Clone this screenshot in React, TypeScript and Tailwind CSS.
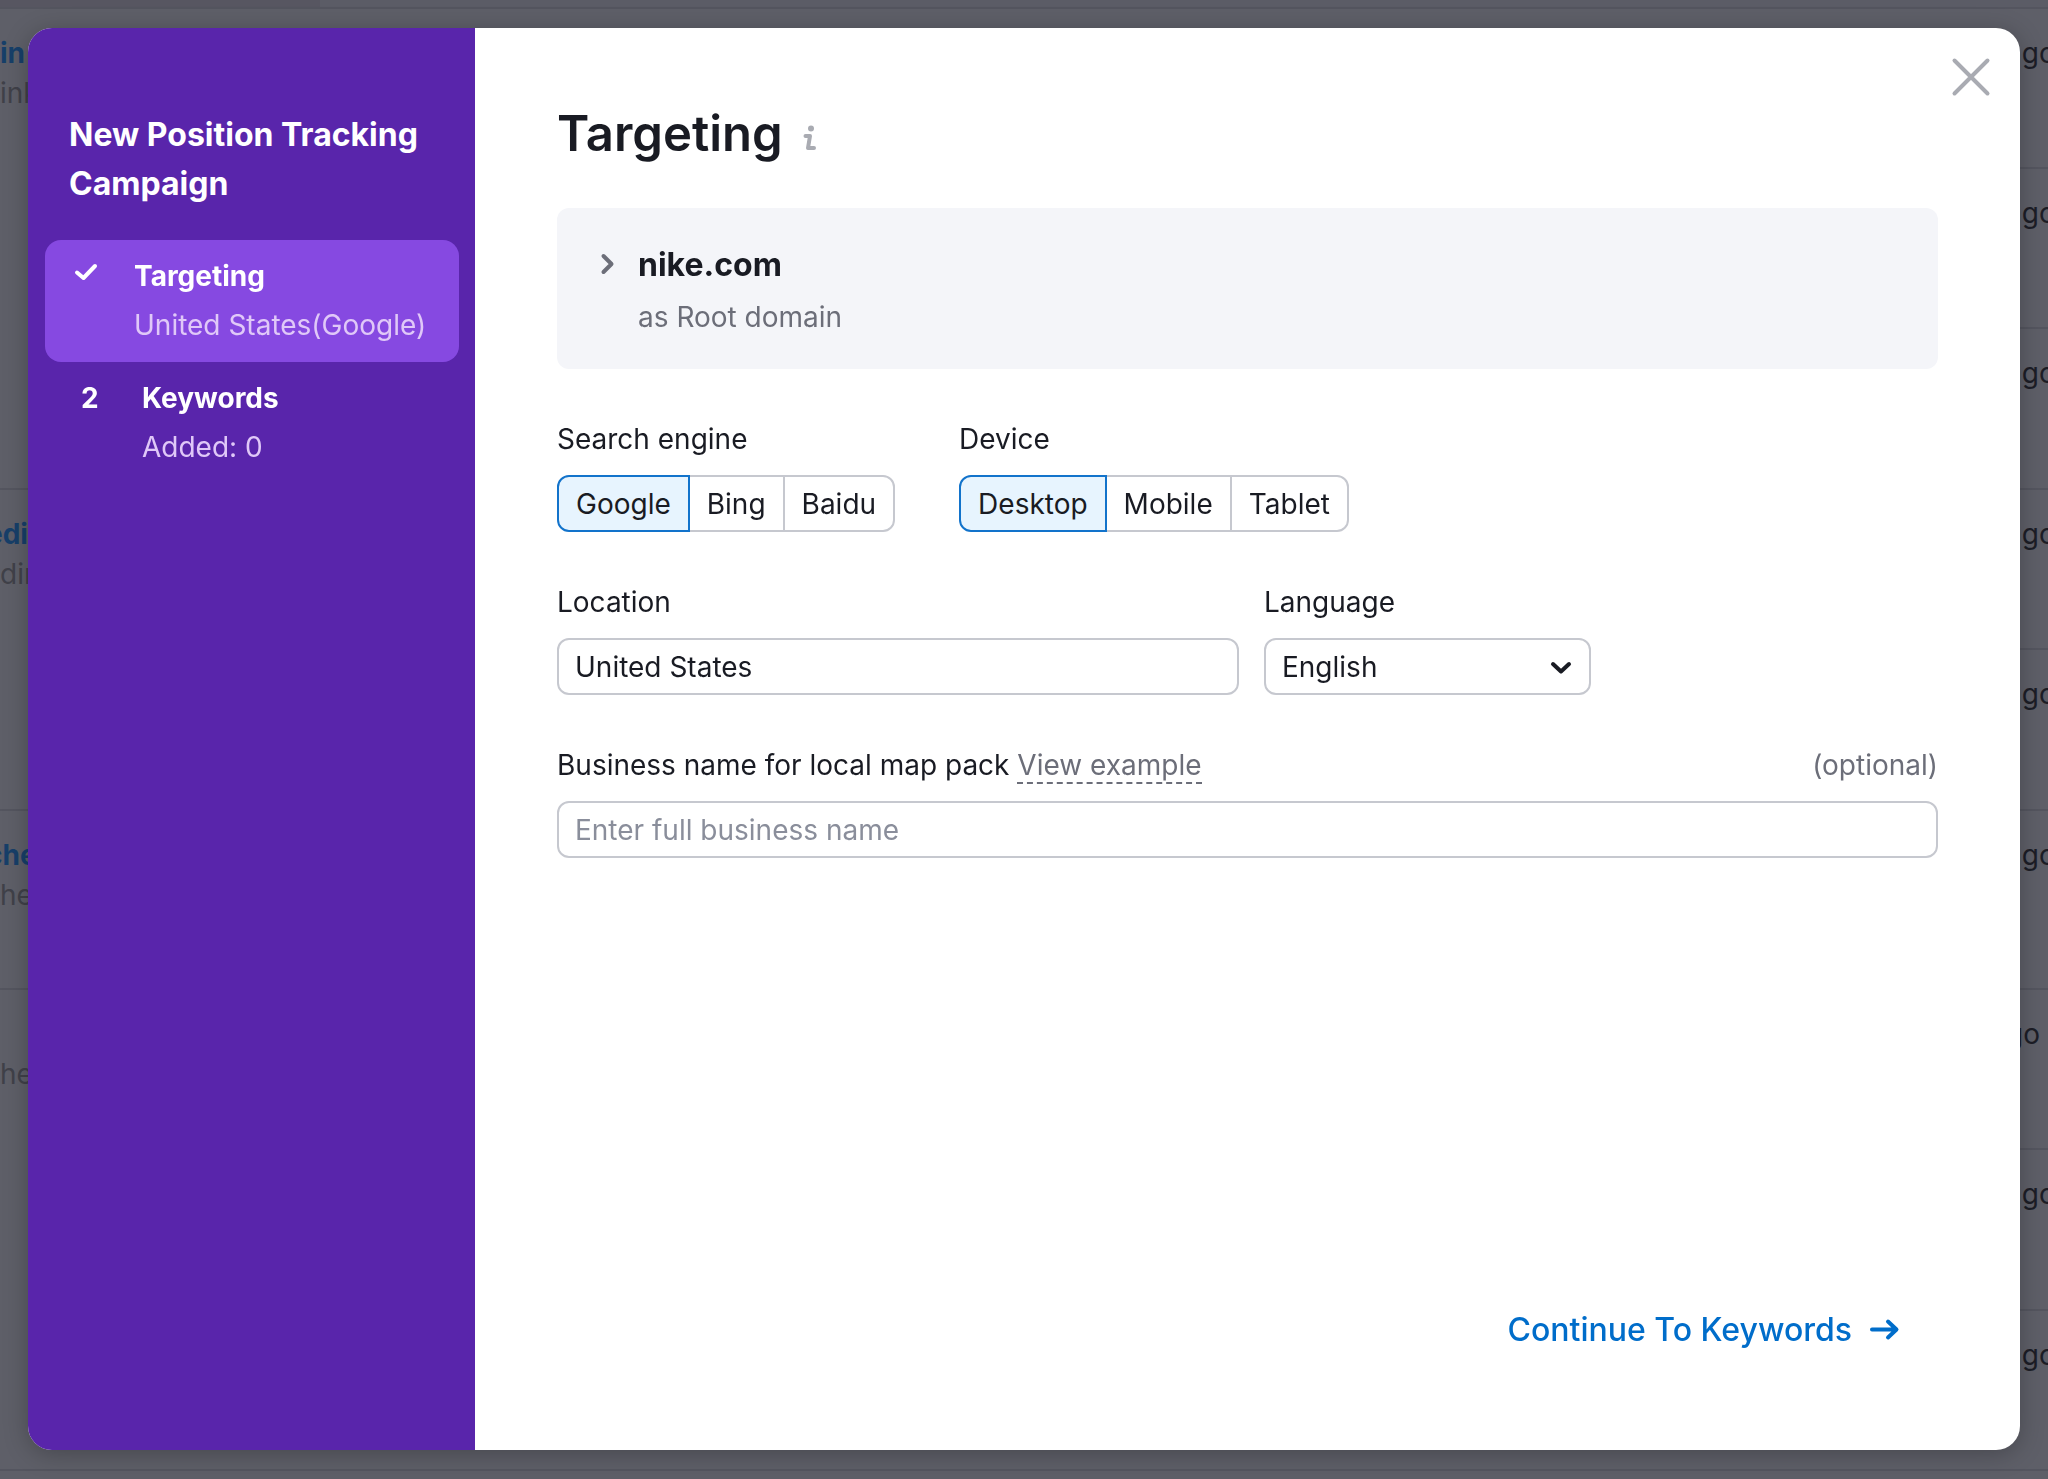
import React, { useState } from 'react';

interface Project {
  name?: string;
  nameClass?: string;
  domain: string;
  rows: number;
}

interface Row {
  height: string;
  project?: Project;
  alignEnd?: boolean;
}

const rows: Row[] = [
  { height: 'h-40', project: { name: 'in', domain: 'ink', rows: 3 } },
  { height: 'h-40' },
  { height: 'h-[161px]' },
  { height: 'h-40', project: { name: 'edi', nameClass: '-ml-3.5', domain: 'din', rows: 2 } },
  { height: 'h-[161px]' },
  { height: 'h-[179px]', project: { name: 'che', nameClass: '-ml-3.5', domain: 'he', rows: 1 } },
  { height: 'h-40', project: { domain: 'he', rows: 3 }, alignEnd: true },
  { height: 'h-[161px]' },
  { height: 'h-40' },
];

const ProjectsTable: React.FC = () => (
  <div className="h-screen overflow-hidden bg-[#5e5f68]">
    <div className="h-[7px] bg-[#5b5c66]">
      <div className="h-full w-80 bg-[#575661]" />
    </div>
    <table className="w-full table-fixed border-collapse text-[28px] leading-10">
      <tbody>
        {rows.map((row, i) => (
          <tr key={i} className={row.height}>
            {row.project && (
              <td rowSpan={row.project.rows} className="border-t-2 border-[#54555f] pt-6 align-top whitespace-nowrap">
                <div className={`h-10 font-bold text-[#173f69] ${row.project.nameClass || ''}`}>{row.project.name}</div>
                <div className="text-[#404149]">{row.project.domain}</div>
              </td>
            )}
            <td className="w-[42px] border-t-2 border-[#54555f] pt-6 align-top whitespace-nowrap text-[#1c1d26]">
              <div className={row.alignEnd ? 'flex justify-end pr-2' : ''}>ago</div>
            </td>
          </tr>
        ))}
        <tr>
          <td className="border-t-2 border-[#54555f]" colSpan={2} />
        </tr>
      </tbody>
    </table>
  </div>
);

interface StepProps {
  marker: React.ReactNode;
  title: string;
  subtitle: string;
  active?: boolean;
}

const Step: React.FC<StepProps> = ({ marker, title, subtitle, active }) => (
  <li>
    <button
      type="button"
      className={`flex w-full py-3 text-left text-[28px] leading-[49px] ${active ? 'rounded-2xl bg-[#8649e1] pl-7' : 'pl-9'}`}
    >
      <span className="w-[61px] shrink-0 font-bold text-white">{marker}</span>
      <span>
        <span className="block font-bold text-white">{title}</span>
        <span className="block text-[#e0c8f8]">{subtitle}</span>
      </span>
    </button>
  </li>
);

interface PillsProps {
  label: string;
  options: string[];
}

const Pills: React.FC<PillsProps> = ({ label, options }) => {
  const [selected, setSelected] = useState(options[0]);

  return (
    <div role="group" aria-label={label}>
      <div className="mb-[18px]">{label}</div>
      <div className="flex">
        {options.map((option) => (
          <button
            key={option}
            type="button"
            aria-pressed={option === selected}
            onClick={() => setSelected(option)}
            className={`-ml-0.5 h-[57px] border-2 px-[17px] first:ml-0 first:rounded-l-xl last:rounded-r-xl ${
              option === selected ? 'relative border-[#1273cb] bg-[#e7f4fe]' : 'border-[#c6c8cf] bg-white'
            }`}
          >
            {option}
          </button>
        ))}
      </div>
    </div>
  );
};

const fieldClass = 'h-[57px] w-full rounded-xl border-2 border-[#c6c8cf] bg-white px-4 outline-none';

const App: React.FC = () => {
  const [location, setLocation] = useState('United States');
  const [business, setBusiness] = useState('');

  return (
    <div className="font-['Inter',sans-serif] text-[#191b23]">
      <ProjectsTable />

      <div className="fixed inset-0 flex p-7 pb-[29px]">
        <div
          role="dialog"
          aria-labelledby="dialog-title"
          className="relative flex flex-1 overflow-hidden rounded-3xl bg-white shadow-[0_4px_24px_rgba(0,0,0,0.25)]"
        >
          <aside className="w-[447px] shrink-0 bg-[#5925ab] pt-[82px] pr-4 pl-[17px]">
            <h2 className="mb-8 pl-6 text-[32px] leading-[49px] font-bold text-white">
              New Position Tracking Campaign
            </h2>
            <ol>
              <Step
                active
                title="Targeting"
                subtitle="United States(Google)"
                marker={
                  <svg className="mt-2" width="28" height="24" viewBox="0 0 28 24" fill="none" stroke="currentColor" strokeWidth="4" strokeLinecap="round" strokeLinejoin="round">
                    <path d="M4 12.500 L10.500 18 L22 6" />
                  </svg>
                }
              />
              <Step title="Keywords" subtitle="Added: 0" marker="2" />
            </ol>
          </aside>

          <main className="flex flex-1 flex-col px-[82px] pt-[70px] pb-[84px] text-[28px] leading-9">
            <div className="mb-[38px] flex h-[72px] items-center gap-5">
              <h1 id="dialog-title" className="text-[49px] leading-[72px] font-semibold">Targeting</h1>
              <button type="button" aria-label="About targeting" className="mt-2 text-[#a9abb2]">
                <svg width="14" height="26" viewBox="0 0 14 26" fill="none" stroke="currentColor" strokeWidth="4" strokeLinecap="round" strokeLinejoin="round">
                  <circle cx="8" cy="3.500" r="3" fill="currentColor" stroke="none" />
                  <path d="M2.500 11 H7 L5 23 H11" />
                </svg>
              </button>
            </div>

            <section className="mb-[52px] flex h-[161px] gap-[22px] rounded-xl bg-[#f4f5f9] pt-8 pl-[43px]">
              <button type="button" aria-label="Expand domain" className="mt-3 h-6 text-[#6c6e79]">
                <svg width="16" height="24" viewBox="0 0 16 24" fill="none" stroke="currentColor" strokeWidth="4" strokeLinecap="round" strokeLinejoin="round">
                  <path d="M3.500 4 L11.500 12 L3.500 20" />
                </svg>
              </button>
              <div>
                <div className="text-[32px] leading-[49px] font-bold">nike.com</div>
                <div className="leading-[56px] text-[#6c6e79]">as Root domain</div>
              </div>
            </section>

            <form className="flex flex-col gap-[52px]">
              <div className="flex gap-16">
                <Pills label="Search engine" options={['Google', 'Bing', 'Baidu']} />
                <Pills label="Device" options={['Desktop', 'Mobile', 'Tablet']} />
              </div>

              <div className="flex gap-[25px]">
                <div className="w-[682px]">
                  <label htmlFor="location" className="mb-[18px] block">Location</label>
                  <input id="location" className={fieldClass} value={location} onChange={(e) => setLocation(e.target.value)} />
                </div>
                <div className="w-[327px]">
                  <label htmlFor="language" className="mb-[18px] block">Language</label>
                  <div className="relative">
                    <select id="language" className={`${fieldClass} appearance-none`}>
                      <option>English</option>
                      <option>Spanish</option>
                    </select>
                    <svg className="pointer-events-none absolute top-[18px] right-[17px]" width="26" height="24" viewBox="0 0 26 24" fill="none" stroke="currentColor" strokeWidth="4" strokeLinecap="round" strokeLinejoin="round">
                      <path d="M5 8 L13 15.500 L21 8" />
                    </svg>
                  </div>
                </div>
              </div>

              <div>
                <div className="mb-[18px] flex justify-between">
                  <div>
                    <label htmlFor="business">Business name for local map pack</label>{' '}
                    <a href="#example" className="border-b-2 border-dashed border-[#6c6e79] text-[#6c6e79]">View example</a>
                  </div>
                  <span className="text-[#6c6e79]">(optional)</span>
                </div>
                <input
                  id="business"
                  className={`${fieldClass} placeholder:text-[#8a8e9b]`}
                  placeholder="Enter full business name"
                  value={business}
                  onChange={(e) => setBusiness(e.target.value)}
                />
              </div>
            </form>

            <button type="button" className="mt-auto mr-[38px] flex items-center gap-4 self-end text-[32px] leading-[72px] font-medium text-[#006dca]">
              Continue To Keywords
              <svg width="32" height="28" viewBox="0 0 32 28" fill="none" stroke="currentColor" strokeWidth="4" strokeLinecap="round" strokeLinejoin="round">
                <path d="M4 13.500 H28 M20 5.500 L28.500 13.500 L20 21.500" />
              </svg>
            </button>
          </main>

          <button type="button" aria-label="Close" className="absolute top-7 right-7 text-[#a9abb2]">
            <svg width="42" height="42" viewBox="0 0 42 42" fill="none" stroke="currentColor" strokeWidth="4" strokeLinecap="round">
              <path d="M4.500 4.500 L37.500 37.500 M37.500 4.500 L4.500 37.500" />
            </svg>
          </button>
        </div>
      </div>
    </div>
  );
};

export default App;
